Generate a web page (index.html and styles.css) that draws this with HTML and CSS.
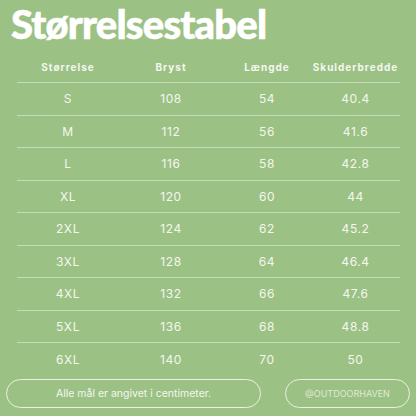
FILE: index.html
```html
<!DOCTYPE html>
<html lang="da">
<head>
<meta charset="utf-8">
<title>Størrelsestabel</title>
<link rel="stylesheet" href="styles.css">
</head>
<body>
<div class="page">
  <h1 class="title">Størrelsestabel</h1>
  <div class="table">
    <div class="row head">
      <span>Størrelse</span><span>Bryst</span><span>Længde</span><span>Skulderbredde</span>
    </div>
    <div class="row"><span>S</span><span>108</span><span>54</span><span>40.4</span></div>
    <div class="row"><span>M</span><span>112</span><span>56</span><span>41.6</span></div>
    <div class="row"><span>L</span><span>116</span><span>58</span><span>42.8</span></div>
    <div class="row"><span>XL</span><span>120</span><span>60</span><span>44</span></div>
    <div class="row"><span>2XL</span><span>124</span><span>62</span><span>45.2</span></div>
    <div class="row"><span>3XL</span><span>128</span><span>64</span><span>46.4</span></div>
    <div class="row"><span>4XL</span><span>132</span><span>66</span><span>47.6</span></div>
    <div class="row"><span>5XL</span><span>136</span><span>68</span><span>48.8</span></div>
    <div class="row last"><span>6XL</span><span>140</span><span>70</span><span>50</span></div>
  </div>
  <div class="footer">
    <div class="pill note">Alle mål er angivet i centimeter.</div>
    <div class="pill handle">@OUTDOORHAVEN</div>
  </div>
</div>
</body>
</html>
```
FILE: styles.css
```css
html, body {
  margin: 0;
  padding: 0;
}
body {
  background: #9cc184;
}
.page {
  width: 416px;
  height: 416px;
  background: #9cc184;
  color: #f4f7ef;
  font-family: "Open Sans", "Liberation Sans", sans-serif;
  box-sizing: border-box;
  padding-top: 1px;
}
.title {
  margin: 0 0 0 11px;
  height: 51px;
  font-family: "Lato", "Open Sans", sans-serif;
  font-weight: 900;
  font-size: 40px;
  line-height: 47px;
  letter-spacing: -0.8px;
  color: #ffffff;
  -webkit-text-stroke: 0.6px #ffffff;
}
.table {
  margin-left: 17px;
  width: 383px;
}
.row {
  display: grid;
  grid-template-columns: 102px 104px 88px 1fr;
  height: 32.5px;
  align-items: center;
  border-bottom: 1px solid #c6dcb6;
  box-sizing: border-box;
  font-family: "Inter", "Liberation Sans", sans-serif;
  font-size: 12px;
  font-weight: 400;
  letter-spacing: 0.6px;
}
.row span {
  text-align: center;
}
.row.head {
  height: 31px;
  font-weight: 700;
  font-size: 10px;
  letter-spacing: 1px;
}
.row.last {
  border-bottom: none;
}
.footer {
  display: flex;
  gap: 24px;
  margin: 3px 0 0 6px;
}
.pill {
  height: 29px;
  box-sizing: border-box;
  border: 1.5px solid #eaf1e2;
  border-radius: 15px;
  display: flex;
  align-items: center;
  justify-content: center;
  font-family: "Inter", "Liberation Sans", sans-serif;
}
.note {
  width: 255px;
  font-size: 10.5px;
}
.handle {
  width: 125px;
  font-size: 9px;
  color: #dfe9d5;
}
```
